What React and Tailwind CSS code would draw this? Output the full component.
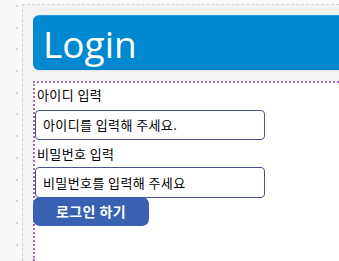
import React from "react";

export default function App() {
  const dots = Array.from({ length: 12 });
  return (
    <div className="w-[339px] h-[261px] overflow-hidden flex bg-[#f8f8f8]" style={{ fontFamily: '"Noto Sans", "Noto Sans CJK KR", sans-serif' }}>
      <div className="w-[22px] shrink-0 flex flex-col items-end pr-[4px] pt-[5px] gap-[19.7px]">
        {dots.map((_, i) => (
          <div key={i} className="w-[2px] h-[2px] bg-[#d6d6d6]" />
        ))}
      </div>
      <div className="flex-1 mt-[4px] border-l border-t border-dashed border-[#d4d4d4] bg-[#f3f3f3] pl-[10px] pt-[10px] flex flex-col min-w-0">
        <div className="h-[55px] bg-[#0088d1] rounded-l-[6px] border-t border-[#2a9ad8] flex items-center pl-[10px] shrink-0">
          <span className="text-white text-[37px] leading-none" style={{ fontFamily: '"Open Sans", sans-serif' }}>Login</span>
        </div>
        <div className="h-[1px] bg-[#e3e3e3] shrink-0" />
        <div className="mt-[10px] flex-1 bg-white border-t-2 border-l-2 border-dotted border-[#a56cb5] pt-[2px]" style={{ fontFamily: '"Noto Sans CJK KR", sans-serif' }}>
          <div className="text-[13px] tracking-[0.4px] leading-[20px] text-black pl-[2px]">아이디 입력</div>
          <div className="mt-[5px] w-[230px] h-[30px] border border-[#4a5190] rounded-[4px] flex items-center pl-[7px] text-[13px] tracking-[0.4px] text-black">아이디를 입력해 주세요.</div>
          <div className="mt-[4px] text-[13px] tracking-[0.4px] leading-[20px] text-black pl-[2px]">비밀번호 입력</div>
          <div className="mt-[3px] w-[230px] h-[31px] border border-[#4a5190] rounded-[4px] flex items-center pl-[7px] text-[13px] tracking-[0.4px] text-black">비밀번호를 입력해 주세요</div>
          <div className="w-[116px] h-[29px] -ml-[2px] -mt-[1px] rounded-[7px] bg-[#3a60b2] text-white text-[14px] tracking-[0.4px] font-bold flex items-center justify-center">로그인 하기</div>
        </div>
      </div>
    </div>
  );
}
